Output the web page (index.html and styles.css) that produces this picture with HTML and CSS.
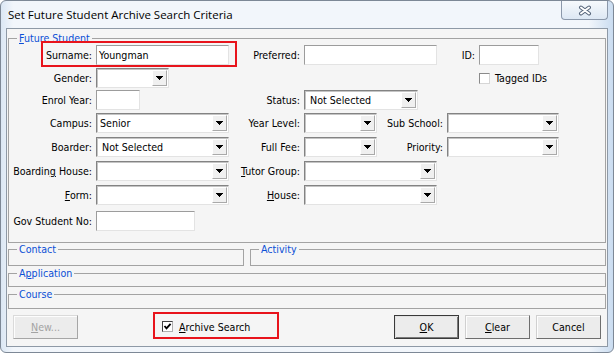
FILE: index.html
```html
<!DOCTYPE html>
<html>
<head>
<meta charset="utf-8">
<link rel="stylesheet" href="styles.css">
</head>
<body>
<div class="window">
  <div class="titlebar">
    <span class="title">Set Future Student Archive Search Criteria</span>
    <div class="close">
      <svg width="14" height="11" viewBox="0 0 14 11">
        <path d="M3 2.5 L11 8.5 M11 2.5 L3 8.5" stroke="#56657a" stroke-width="4" stroke-linecap="round"/>
        <path d="M3 2.5 L11 8.5 M11 2.5 L3 8.5" stroke="#ffffff" stroke-width="2" stroke-linecap="round"/>
      </svg>
    </div>
  </div>
  <div class="client">
    <fieldset class="group main">
      <legend><u>F</u>uture Student</legend>
      <div class="form">
        <span class="lbl c1">Surname:</span>
        <div class="tb c2 w133">Youngman</div>
        <span class="lbl c3">Preferred:</span>
        <div class="tb c45 w133"></div>
        <div class="c6 idcell"><span class="lbl idl">ID:</span><div class="tb w60"></div></div>

        <span class="lbl c1">Gender:</span>
        <div class="combo c2 w73"><span class="v"></span><span class="arr"></span></div>
        <div class="c6 tagcell"><span class="chk"></span><span>Tagged IDs</span></div>

        <span class="lbl c1">Enrol Year:</span>
        <div class="tb c2 w44"></div>
        <span class="lbl c3">Status:</span>
        <div class="combo c45 w114"><span class="v pad5">Not Selected</span><span class="arr"></span></div>

        <span class="lbl c1">Campus:</span>
        <div class="combo c2 w133"><span class="v">Senior</span><span class="arr"></span></div>
        <span class="lbl c3">Year Level:</span>
        <div class="combo c4 w73"><span class="v"></span><span class="arr"></span></div>
        <span class="lbl c5">Sub School:</span>
        <div class="combo c6 w112"><span class="v"></span><span class="arr"></span></div>

        <span class="lbl c1">Boarder:</span>
        <div class="combo c2 w133"><span class="v pad5">Not Selected</span><span class="arr"></span></div>
        <span class="lbl c3">Full Fee:</span>
        <div class="combo c4 w73"><span class="v"></span><span class="arr"></span></div>
        <span class="lbl c5">Priority:</span>
        <div class="combo c6 w112"><span class="v"></span><span class="arr"></span></div>

        <span class="lbl c1">Boardin<u>g</u> House:</span>
        <div class="combo c2 w133"><span class="v"></span><span class="arr"></span></div>
        <span class="lbl c3"><u>T</u>utor Group:</span>
        <div class="combo c45 w133"><span class="v"></span><span class="arr"></span></div>

        <span class="lbl c1"><u>F</u>orm:</span>
        <div class="combo c2 w133"><span class="v"></span><span class="arr"></span></div>
        <span class="lbl c3"><u>H</u>ouse:</span>
        <div class="combo c45 w133"><span class="v"></span><span class="arr"></span></div>

        <span class="lbl c1">Gov Student No:</span>
        <div class="tb c2 w99"></div>

        <div class="highlight hl-surname"></div>
      </div>
    </fieldset>
    <div class="pair">
      <fieldset class="group contact"><legend>Contact</legend></fieldset>
      <fieldset class="group activity"><legend>Activity</legend></fieldset>
    </div>
    <fieldset class="group app"><legend>A<u>p</u>plication</legend></fieldset>
    <fieldset class="group course"><legend>Course</legend></fieldset>
    <div class="actions">
      <button class="btn" disabled><u>N</u>ew...</button>
      <div class="archive">
        <span class="chk on">
          <svg width="9" height="9" viewBox="0 0 9 9"><path d="M1.5 4 L3.5 6.3 L7.6 1.8" fill="none" stroke="#000" stroke-width="1.9"/></svg>
        </span>
        <span><u>A</u>rchive Search</span>
      </div>
      <div class="right">
        <button class="btn default"><u>O</u>K</button>
        <button class="btn"><u>C</u>lear</button>
        <button class="btn">Cancel</button>
      </div>
    </div>
  </div>
</div>
</body>
</html>
```
FILE: styles.css
```css
html, body {
  margin: 0;
  padding: 0;
  background: #ffffff;
}
body {
  font-family: "DejaVu Sans Condensed", "DejaVu Sans", sans-serif;
  font-stretch: condensed;
  font-size: 10.6px;
  color: #000;
}
.window {
  width: 614px;
  height: 353px;
  box-sizing: border-box;
  border: 1px solid #7d8896;
  border-radius: 6px;
  background: linear-gradient(to right, #dbe7f4 0, #f2f6fb 2%, #f2f6fb 96%, #cadcf0 100%);
  display: flex;
  flex-direction: column;
  overflow: hidden;
}
.titlebar {
  height: 27px;
  flex: none;
  display: flex;
  align-items: flex-start;
  justify-content: space-between;
}
.title {
  font-family: "Open Sans", "Noto Sans", sans-serif;
  font-stretch: normal;
  font-size: 11.5px;
  line-height: 14px;
  margin: 7px 0 0 7px;
  color: #000;
}
.close {
  width: 47px;
  height: 19px;
  margin-right: 5px;
  box-sizing: border-box;
  border: 1px solid #8b98aa;
  border-top: none;
  border-radius: 0 0 4px 4px;
  background: linear-gradient(#f6f9fc, #dde8f4);
  display: flex;
  align-items: center;
  justify-content: center;
}
.close svg { display: block; margin-top: 1px; }
.client {
  flex: 1;
  margin: 0 5px 5px 5px;
  border: 1px solid #8e99a6;
  background: #f5f5f5;
  display: flex;
  flex-direction: column;
}
.group {
  margin: 0 1px;
  padding: 0;
  border: 1px solid #a3a3a3;
  min-width: 0;
}
.group legend {
  margin-left: 8px;
  padding: 0 2px;
  line-height: 13px;
  color: #0b4fd6;
}
.main { margin-top: 3px; padding-bottom: 11px; }
.pair {
  display: flex;
  gap: 6px;
  margin: 0 1px;
}
.pair .group { margin: 0; padding-bottom: 9px; }
.contact { width: 234px; flex: none; }
.activity { flex: 1; }
.app { margin-top: 1px; padding-bottom: 6px; }
.course { margin-top: 1px; padding-bottom: 7px; }

.form {
  position: relative;
  display: grid;
  grid-template-columns: 87px 140px 68px 79px 64px 1fr;
  grid-template-rows: 23px 22px 23px 24px 24px 24px 26px 20px;
  align-items: start;
}
.c1 { grid-column: 1; }
.c2 { grid-column: 2; }
.c3 { grid-column: 3; }
.c4 { grid-column: 4; }
.c45 { grid-column: 4 / span 2; }
.c5 { grid-column: 5; }
.c6 { grid-column: 6; }
.lbl {
  justify-self: end;
  height: 20px;
  line-height: 20px;
  padding-right: 4px;
  white-space: nowrap;
}
.w133 { width: 133px; }
.w114 { width: 114px; }
.w112 { width: 112px; }
.w99 { width: 99px; }
.w73 { width: 73px; }
.w60 { width: 60px; }
.w44 { width: 44px; }
.tb {
  height: 20px;
  box-sizing: border-box;
  background: #fff;
  border: 1px solid;
  border-color: #9c9c9c #e3e3e3 #e3e3e3 #9c9c9c;
  padding: 0 2px;
  line-height: 18px;
  white-space: nowrap;
}
.combo {
  height: 20px;
  box-sizing: border-box;
  background: #fff;
  border: 1px solid;
  border-color: #838383 #e3e3e3 #e3e3e3 #838383;
  box-shadow: inset 1px 1px 0 #c4c4c4;
  display: flex;
}
.combo .v {
  flex: 1;
  padding-left: 3px;
  line-height: 18px;
  white-space: nowrap;
  overflow: hidden;
}
.combo .v.pad5 { padding-left: 5px; }
.arr {
  width: 15px;
  flex: none;
  margin: 1px 1px 1px 0;
  box-sizing: border-box;
  background: #f0f0f0;
  border: 1px solid;
  border-color: #ffffff #a9a9a9 #a9a9a9 #ffffff;
  display: flex;
  align-items: center;
  justify-content: center;
}
.arr::after {
  content: "";
  width: 7px;
  height: 4px;
  background:
    linear-gradient(#000, #000) 0 0 / 7px 1px no-repeat,
    linear-gradient(#000, #000) 1px 1px / 5px 1px no-repeat,
    linear-gradient(#000, #000) 2px 2px / 3px 1px no-repeat,
    linear-gradient(#000, #000) 3px 3px / 1px 1px no-repeat;
}
.idcell {
  display: flex;
  align-items: flex-start;
}
.idl {
  width: 32px;
  box-sizing: border-box;
  text-align: right;
}
.tagcell {
  display: flex;
  align-items: center;
  gap: 5px;
  height: 20px;
  padding-left: 32px;
}
.chk {
  width: 11px;
  height: 11px;
  box-sizing: border-box;
  border: 1px solid;
  border-color: #8a8a8a #d6d6d6 #d6d6d6 #8a8a8a;
  background: #fff;
  flex: none;
  display: flex;
  align-items: center;
  justify-content: center;
}
.chk.on { border-color: #404040 #b0b0b0 #b0b0b0 #404040; }
.chk svg { display: block; }
.highlight {
  position: absolute;
  box-sizing: border-box;
  border: 2px solid #e8141c;
}
.hl-surname {
  left: 32px;
  top: -4px;
  width: 196px;
  height: 26px;
}
.actions {
  display: flex;
  align-items: flex-end;
  margin-top: 3px;
  padding: 0 6px;
}
.btn {
  width: 65px;
  height: 24px;
  box-sizing: border-box;
  font: inherit;
  color: #000;
  background: #ececec;
  border: 1px solid;
  border-color: #d0d0d0 #6e6e6e #6e6e6e #d0d0d0;
  box-shadow: inset 1px 1px 0 #fdfdfd;
  border-radius: 0;
  padding: 0;
  flex: none;
}
.btn.default {
  border: 1px solid #3a3a3a;
  box-shadow: inset 1px 1px 0 #e2e2e2, inset -1px -1px 0 #7a7a7a;
}
.btn:disabled {
  color: #a3a3a3;
  border-color: #dadada #a6a6a6 #a6a6a6 #dadada;
}
.archive {
  margin-left: 75px;
  width: 126px;
  height: 27px;
  box-sizing: border-box;
  border: 2px solid #e8141c;
  display: flex;
  align-items: center;
  gap: 6px;
  padding: 2px 0 0 7px;
}
.right {
  margin-left: auto;
  display: flex;
  gap: 6px;
}
```
